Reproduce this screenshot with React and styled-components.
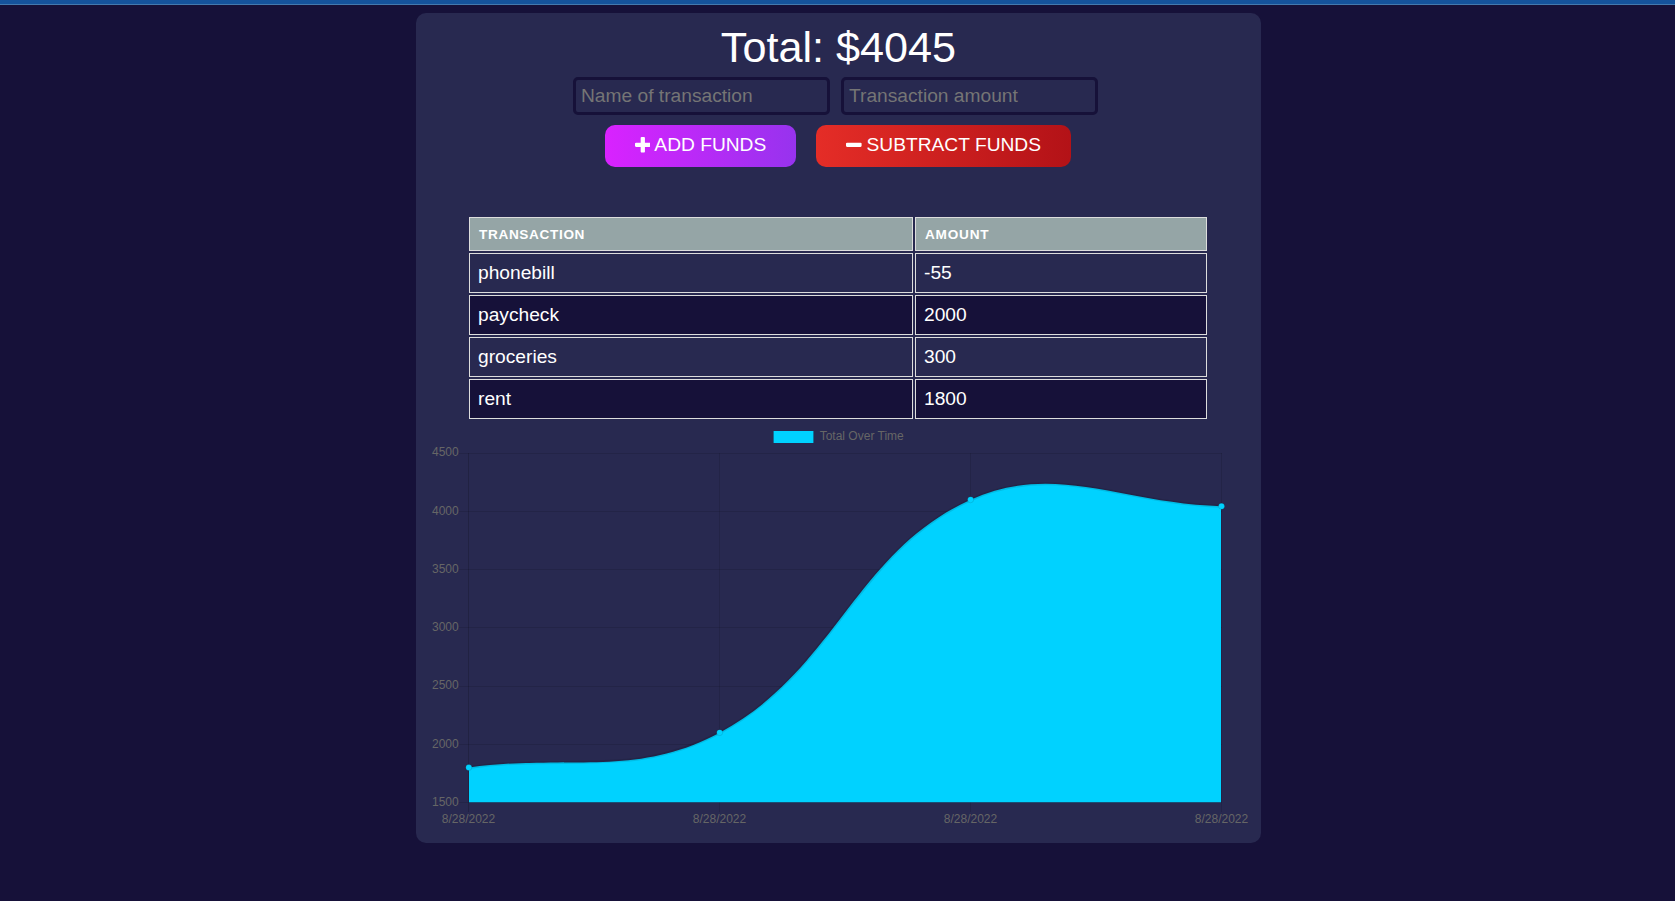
import React from "react";
import styled, { createGlobalStyle } from "styled-components";

const GlobalStyle = createGlobalStyle`
  *, *::before, *::after { box-sizing: border-box; }
  html { background: #161139; }
  body {
    margin: 0;
    min-height: 100vh;
    background: #161139;
    color: #fff;
    font-family: "Liberation Sans", Arial, sans-serif;
    font-size: 19.2px;
    overflow: hidden;
  }
`;

const TopBar = styled.div`
  height: 5px;
  background: #15539b;
  border-bottom: 1px solid #4379ae;
`;

const Card = styled.main`
  width: 845px;
  height: 830px;
  margin: 8px 0 0 416px;
  background: #282950;
  border-radius: 10px;
  display: flex;
  flex-direction: column;
  align-items: center;
`;

const Total = styled.h1`
  margin: 0;
  padding-top: 9px;
  height: 64px;
  font-size: 43.2px;
  font-weight: 400;
  line-height: 50px;
  white-space: nowrap;
`;

const Fields = styled.div`
  display: flex;
  gap: 11px;
  padding-right: 6px;
`;

const Field = styled.input`
  width: 257px;
  height: 38px;
  padding: 1px 5px;
  border: 3px solid #161139;
  border-radius: 5px;
  background: transparent;
  color: #fff;
  font: inherit;
  outline: none;
  &::placeholder { color: #757575; opacity: 1; }
`;

const Actions = styled.div`
  display: flex;
  gap: 20px;
  margin-top: 10px;
  padding-right: 1px;
`;

const ActionButton = styled.button`
  width: ${(p) => p.$width}px;
  height: 42px;
  padding: 0 0 2px;
  border: 0;
  border-radius: 10px;
  display: flex;
  align-items: center;
  justify-content: center;
  gap: ${(p) => p.$gap}px;
  background: linear-gradient(to right, ${(p) => p.$from}, ${(p) => p.$to});
  color: #fff;
  font: inherit;
  text-transform: uppercase;
  white-space: nowrap;
`;

const Icon = styled.svg`
  width: 15.6px;
  height: 15.6px;
  fill: currentColor;
`;

const Table = styled.div`
  width: 738px;
  margin: 50px 1px 0 0;
  display: flex;
  flex-direction: column;
  gap: 2px;
`;

const Row = styled.div`
  display: grid;
  grid-template-columns: 444px 292px;
  gap: 2px;
`;

const Cell = styled.div`
  height: 40px;
  padding: 0 8px;
  border: 1px solid #dddddd;
  line-height: 37px;
  background: ${(p) => (p.$dark ? "#161139" : "transparent")};
`;

const HeadCell = styled(Cell)`
  height: 34px;
  padding-left: 9px;
  background: #95a5a6;
  font-size: 13.6px;
  font-weight: 700;
  line-height: 33px;
  letter-spacing: ${(p) => p.$spacing}px;
  text-transform: uppercase;
`;

const Chart = styled.svg`
  display: block;
  width: 845px;
  height: 424px;
  text {
    fill: #666;
    font-family: "Liberation Sans", Arial, sans-serif;
    font-size: 12px;
  }
`;

const transactions = [
  ["phonebill", "-55"],
  ["paycheck", "2000"],
  ["groceries", "300"],
  ["rent", "1800"],
];

const LEFT = 52.8;
const STEP = 250.9;
const TOP = 34.2;
const BOTTOM = 383.5;
const toY = (v) => BOTTOM - ((v - 1500) / 3000) * (BOTTOM - TOP);

const points = [1800, 2100, 4100, 4045].map((v, i) => ({
  x: LEFT + i * STEP,
  y: toY(v),
}));

function handles(i, tension = 0.4) {
  const cur = points[i];
  const prev = points[i - 1] || cur;
  const next = points[i + 1] || cur;
  const a = Math.hypot(cur.x - prev.x, cur.y - prev.y);
  const b = Math.hypot(next.x - cur.x, next.y - cur.y);
  const fa = (tension * a) / (a + b);
  const fb = (tension * b) / (a + b);
  const dx = next.x - prev.x;
  const dy = next.y - prev.y;
  return {
    before: `${cur.x - fa * dx} ${cur.y - fa * dy}`,
    after: `${cur.x + fb * dx} ${cur.y + fb * dy}`,
  };
}

const curve = points
  .map((p, i) =>
    i === 0
      ? `M${p.x} ${p.y}`
      : `C${handles(i - 1).after} ${handles(i).before} ${p.x} ${p.y}`
  )
  .join(" ");

const ticks = [4500, 4000, 3500, 3000, 2500, 2000, 1500];

function TotalChart() {
  return (
    <Chart viewBox="0 0 845 424">
      <defs>
        <clipPath id="plot">
          <rect x="53" y="34" width="752" height="349.3" />
        </clipPath>
      </defs>
      <rect x="357.5" y="12" width="40" height="12" fill="#00d2ff" />
      <path d="M357.5 12V24M397.5 12V24" stroke="rgba(0,0,0,.1)" />
      <text x="403.7" y="21">Total Over Time</text>
      {ticks.map((t) => {
        const y = Math.floor(toY(t)) + 0.5;
        return (
          <g key={t}>
            <path d={`M43 ${y}H806`} stroke="rgba(0,0,0,.1)" />
            <text x="42.7" y={Math.floor(toY(t) + 3.75)} textAnchor="end">{t}</text>
          </g>
        );
      })}
      {points.map((p, i) => {
        const x = Math.floor(p.x) + 0.5;
        return (
          <g key={x}>
            <path d={`M${x} 34V393`} stroke={i === 0 ? "rgba(0,0,0,.17)" : "rgba(0,0,0,.1)"} />
            <text x={x} y="404" textAnchor="middle">8/28/2022</text>
          </g>
        );
      })}
      <path d={`${curve} V384 H${LEFT} Z`} fill="#00d2ff" clipPath="url(#plot)" />
      <path d={curve} fill="none" stroke="rgba(0,0,0,.1)" strokeWidth="3" />
      {points.map((p) => (
        <circle key={p.x} cx={p.x} cy={p.y} r="3" fill="#00d2ff" stroke="rgba(0,0,0,.1)" />
      ))}
    </Chart>
  );
}

export default function App() {
  return (
    <>
      <GlobalStyle />
      <TopBar />
      <Card>
        <Total>Total: $4045</Total>
        <Fields>
          <Field placeholder="Name of transaction" />
          <Field placeholder="Transaction amount" />
        </Fields>
        <Actions>
          <ActionButton $width={191} $gap={4} $from="#d922ff" $to="#9733ee">
            <Icon viewBox="192 128 1408 1408">
              <path d="M1600 736v192q0 40-28 68t-68 28h-416v416q0 40-28 68t-68 28h-192q-40 0-68-28t-28-68v-416h-416q-40 0-68-28t-28-68v-192q0-40 28-68t68-28h416v-416q0-40 28-68t68-28h192q40 0 68 28t28 68v416h416q40 0 68 28t28 68z" />
            </Icon>
            Add Funds
          </ActionButton>
          <ActionButton $width={255} $gap={5} $from="#e52d27" $to="#b31217">
            <Icon viewBox="192 128 1408 1408">
              <path d="M1600 736v192q0 40-28 68t-68 28h-1216q-40 0-68-28t-28-68v-192q0-40 28-68t68-28h1216q40 0 68 28t28 68z" />
            </Icon>
            Subtract Funds
          </ActionButton>
        </Actions>
        <Table>
          <Row>
            <HeadCell $spacing={0.65}>Transaction</HeadCell>
            <HeadCell $spacing={0.8}>Amount</HeadCell>
          </Row>
          {transactions.map(([name, amount], i) => (
            <Row key={name}>
              <Cell $dark={i % 2 === 1}>{name}</Cell>
              <Cell $dark={i % 2 === 1}>{amount}</Cell>
            </Row>
          ))}
        </Table>
        <TotalChart />
      </Card>
    </>
  );
}
